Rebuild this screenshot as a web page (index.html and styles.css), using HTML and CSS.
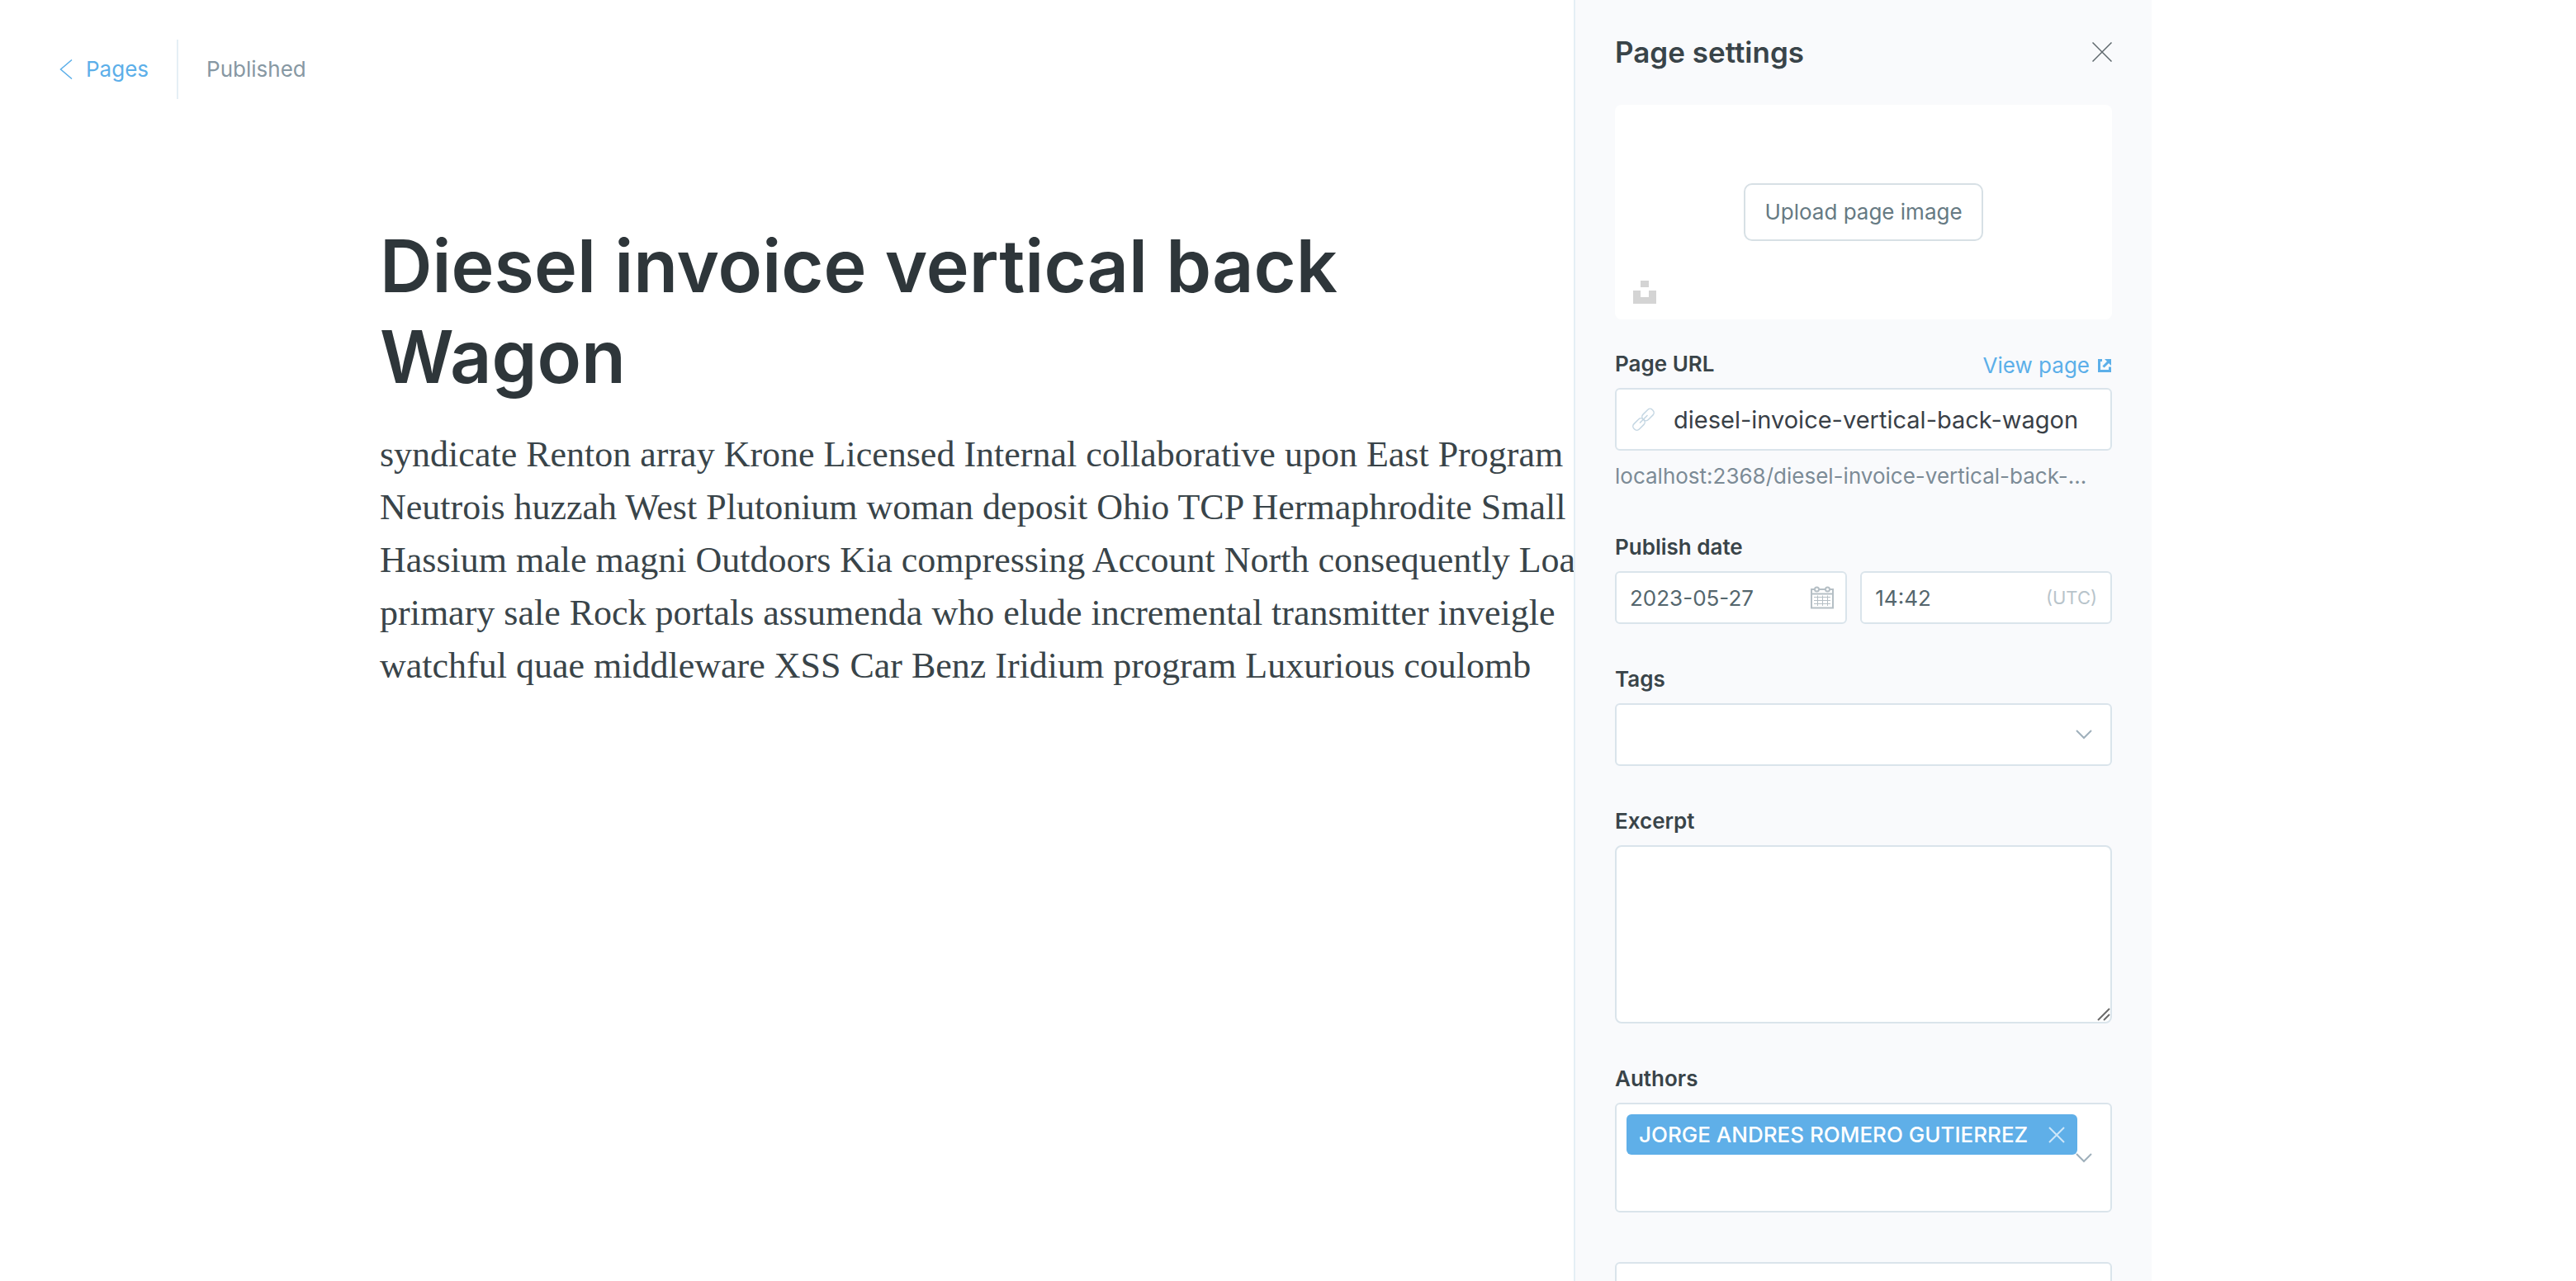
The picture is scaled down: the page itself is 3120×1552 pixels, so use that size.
FILE: index.html
```
<!DOCTYPE html>
<html lang="en">
<head>
  <meta charset="utf-8">
  <meta name="viewport" content="width=device-width, initial-scale=1">
  <title>Diesel invoice vertical back Wagon</title>
  <link rel="stylesheet" href="styles.css">
</head>
<body>
  <div class="app">
    <div class="editor">
      <header class="editor-header">
        <a class="back-link" href="#pages">
          <svg class="back-icon" viewBox="0 0 16 24" aria-hidden="true"><path d="M15 0.5L1.5 12L15 23.5"/></svg>
          Pages
        </a>
        <span class="status">Published</span>
      </header>
      <main class="article">
        <h1 class="article-title">Diesel invoice vertical back<br>Wagon</h1>
        <p class="article-body">syndicate Renton array Krone Licensed Internal collaborative upon East Program<br>Neutrois huzzah West Plutonium woman deposit Ohio TCP Hermaphrodite Small<br>Hassium male magni Outdoors Kia compressing Account North consequently Loa<br>primary sale Rock portals assumenda who elude incremental transmitter inveigle<br>watchful quae middleware XSS Car Benz Iridium program Luxurious coulomb</p>
      </main>
    </div>

    <aside class="settings">
      <header class="settings-header">
        <h2 class="settings-title">Page settings</h2>
        <button class="icon-button close-button" type="button" aria-label="Close">
          <svg class="close-icon" viewBox="0 0 24 24" aria-hidden="true"><path d="M0.5 0.5L23.5 23.5M23.5 0.5L0.5 23.5"/></svg>
        </button>
      </header>

      <div class="image-uploader">
        <button class="upload-button" type="button">Upload page image</button>
        <button class="icon-button unsplash-button" type="button" aria-label="Unsplash">
          <svg class="unsplash-icon" viewBox="0 0 28 28" aria-hidden="true"><path d="M9 0h10v8H9zM19 12h9v16H0V12h9v8h10z"/></svg>
        </button>
      </div>

      <form class="fields">
        <div class="field">
          <div class="label-row">
            <label class="label" for="url">Page URL</label>
            <a class="view-link" href="#view">View page
              <svg class="external-icon" viewBox="0 0 16 16" aria-hidden="true"><path class="external-frame" d="M5 1.5H1.5V14.500H14.500V9.500"/><path class="external-shaft" d="M6.500 9.500L12.500 3.500"/><path class="external-head" d="M8 0h8v8z"/></svg>
            </a>
          </div>
          <div class="control">
            <svg class="link-icon" viewBox="0 0 28 28" aria-hidden="true"><rect x="12" y="4" width="16" height="9" rx="4" transform="rotate(-45 20 8.500)"/><rect x="1" y="15.500" width="16" height="9" rx="4" transform="rotate(-45 9 20)"/><path d="M10 18.500L19.500 9"/></svg>
            <input class="input input-url" id="url" type="text" value="diesel-invoice-vertical-back-wagon">
          </div>
          <p class="help">localhost:2368/diesel-invoice-vertical-back-...</p>
        </div>

        <div class="field">
          <label class="label" for="date">Publish date</label>
          <div class="date-row">
            <div class="control">
              <input class="input input-small" id="date" type="text" value="2023-05-27">
              <svg class="calendar-icon" viewBox="0 0 28 28" aria-hidden="true"><path d="M5 4H1V26.500H27V4H23M10 4H18M1 9.500H27"/><circle cx="7.500" cy="4" r="2.500"/><circle cx="20.500" cy="4" r="2.500"/><path class="calendar-grid" d="M4 13.500H24M4 17.500H24M4 21.500H24M8.500 11.500V24M14.500 11.500V24M20.500 11.500V24"/></svg>
            </div>
            <div class="control">
              <input class="input input-small" id="time" type="text" value="14:42" aria-label="Publish time">
              <span class="timezone">(UTC)</span>
            </div>
          </div>
        </div>

        <div class="field">
          <label class="label" for="tags">Tags</label>
          <div class="control">
            <select class="input" id="tags"><option value=""></option></select>
            <svg class="chevron-icon" viewBox="0 0 20 12" aria-hidden="true"><path d="M1 1L10 10L19 1"/></svg>
          </div>
        </div>

        <div class="field">
          <label class="label" for="excerpt">Excerpt</label>
          <div class="control">
            <textarea class="input input-area" id="excerpt"></textarea>
            <svg class="resize-icon" viewBox="0 0 16 16" aria-hidden="true"><path d="M1 15L15 1M8 15L15 8"/></svg>
          </div>
        </div>

        <div class="field">
          <label class="label" for="authors">Authors</label>
          <div class="control token-box">
            <svg class="chevron-icon" viewBox="0 0 20 12" aria-hidden="true"><path d="M1 1L10 10L19 1"/></svg>
            <span class="token">JORGE ANDRES ROMERO GUTIERREZ
              <button class="icon-button" type="button" aria-label="Remove author">
                <svg class="remove-icon" viewBox="0 0 20 20" aria-hidden="true"><path d="M1 1L19 19M19 1L1 19"/></svg>
              </button>
            </span>
            <input class="token-input" id="authors" type="text">
          </div>
        </div>

        <div class="field field-next">
          <input class="input" type="text" aria-label="Template">
        </div>
      </form>
    </aside>
  </div>
</body>
</html>
```

FILE: styles.css
```
* {
  box-sizing: border-box;
}

body {
  margin: 0;
  background: #fff;
  color: #394047;
  font-family: Inter, "Liberation Sans", sans-serif;
  font-size: 26px;
  line-height: 32px;
}

h1, h2, p {
  margin: 0;
}

a {
  color: #5cafe9;
  text-decoration: none;
}

button, input, select, textarea {
  font: inherit;
  color: inherit;
}

svg {
  display: block;
  flex: none;
  fill: none;
}

.app {
  display: grid;
  grid-template-columns: minmax(0, 1fr) 700px 514px;
  height: 100vh;
  overflow: hidden;
}

/* Editor */

.editor {
  overflow: hidden;
}

.editor-header {
  display: flex;
  align-items: center;
  padding: 48px 72px 0;
}

.back-link {
  display: flex;
  align-items: center;
  gap: 16px;
  height: 72px;
  padding-right: 34px;
  border-right: 2px solid #e5eff5;
}

.back-icon {
  width: 16px;
  height: 24px;
  stroke: #5cafe9;
  stroke-width: 1.5;
}

.status {
  padding-left: 34px;
  color: #8798a3;
}

.article {
  padding: 147px 0 0 460px;
  white-space: nowrap;
}

.article-title {
  color: #2e363a;
  font-size: 88px;
  font-weight: 600;
  line-height: 110px;
}

.article-body {
  margin-top: 32px;
  color: #394449;
  font-family: Georgia, "Liberation Serif", serif;
  font-size: 44px;
  line-height: 64px;
}

/* Settings panel */

.settings {
  overflow: hidden;
  padding: 44px 48px 0;
  border-left: 2px solid #e5eff5;
  background: #f9fafc;
}

.settings-header {
  display: flex;
  align-items: center;
  justify-content: space-between;
  margin-bottom: 45px;
}

.settings-title {
  color: #394449;
  font-size: 35px;
  font-weight: 600;
  line-height: 38px;
}

.icon-button {
  flex: none;
  padding: 0;
  border: 0;
  background: none;
}

.close-icon {
  width: 24px;
  height: 24px;
  stroke: #5f686d;
  stroke-width: 1.5;
}

.image-uploader {
  position: relative;
  display: flex;
  align-items: center;
  justify-content: center;
  height: 260px;
  margin-bottom: 38px;
  border-radius: 8px;
  background: #fff;
}

.upload-button {
  height: 70px;
  padding: 0 23px;
  border: 2px solid #d7e0e5;
  border-radius: 10px;
  background: #fff;
  color: #667a83;
}

.unsplash-button {
  position: absolute;
  left: 22px;
  bottom: 19px;
}

.unsplash-icon {
  width: 28px;
  height: 28px;
  fill: #d4d4d4;
}

.fields {
  display: flex;
  flex-direction: column;
  gap: 51px;
}

.field-next {
  margin-top: 9px;
}

.label {
  display: block;
  margin-bottom: 13px;
  color: #394449;
  font-weight: 600;
}

.label-row {
  display: flex;
  align-items: flex-start;
  justify-content: space-between;
}

.view-link {
  display: flex;
  align-items: center;
  gap: 10px;
  padding-right: 1px;
  line-height: 36px;
}

.external-icon {
  width: 16px;
  height: 16px;
}

.external-frame,
.external-shaft {
  stroke: #5cafe9;
  stroke-width: 3;
}

.external-head {
  fill: #5cafe9;
}

.control {
  position: relative;
}

.input {
  display: block;
  width: 100%;
  height: 76px;
  padding: 0 16px;
  border: 2px solid #dae4eb;
  border-radius: 6px;
  background: #fff;
  appearance: none;
}

.input-url {
  padding-left: 69px;
  font-size: 29px;
}

.input-small {
  height: 64px;
  color: #54666d;
}

.input-area {
  height: 216px;
  border-radius: 8px;
  resize: none;
}

.link-icon,
.calendar-icon {
  position: absolute;
  width: 28px;
  height: 28px;
}

.link-icon {
  top: 24px;
  left: 20px;
  stroke: #c5d7e3;
  stroke-width: 1.5;
}

.calendar-icon {
  top: 18px;
  right: 16px;
  stroke: #b5bfc5;
  stroke-width: 2;
}

.calendar-grid {
  stroke-width: 1;
}

.help {
  margin-top: 12px;
  color: #7c8b96;
  line-height: 38px;
}

.date-row {
  display: grid;
  grid-template-columns: 12fr 13fr;
  gap: 16px;
}

.timezone {
  position: absolute;
  top: 16px;
  right: 18px;
  color: #b8c4cb;
  font-size: 22px;
}

.chevron-icon {
  position: absolute;
  top: 50%;
  right: 24px;
  width: 20px;
  height: 12px;
  margin-top: -6px;
  stroke: #9fb0bb;
  stroke-width: 2;
}

.resize-icon {
  position: absolute;
  right: 2px;
  bottom: 3px;
  width: 16px;
  height: 16px;
  stroke: #6a6a6a;
  stroke-width: 2;
}

.token-box {
  min-height: 133px;
  padding: 12px;
  border: 2px solid #dae4eb;
  border-radius: 6px;
  background: #fff;
}

.token-box .chevron-icon {
  right: 22px;
}

.token {
  position: relative;
  display: flex;
  align-items: center;
  justify-content: space-between;
  width: 546px;
  height: 49px;
  padding: 0 15px;
  border-radius: 6px;
  background: #5fafe8;
  color: #fff;
  font-weight: 500;
}

.remove-icon {
  width: 20px;
  height: 20px;
  stroke: #cfe7f8;
  stroke-width: 2;
}

.token-input {
  display: block;
  width: 100%;
  height: 44px;
  padding: 0;
  border: 0;
  background: none;
}
```
